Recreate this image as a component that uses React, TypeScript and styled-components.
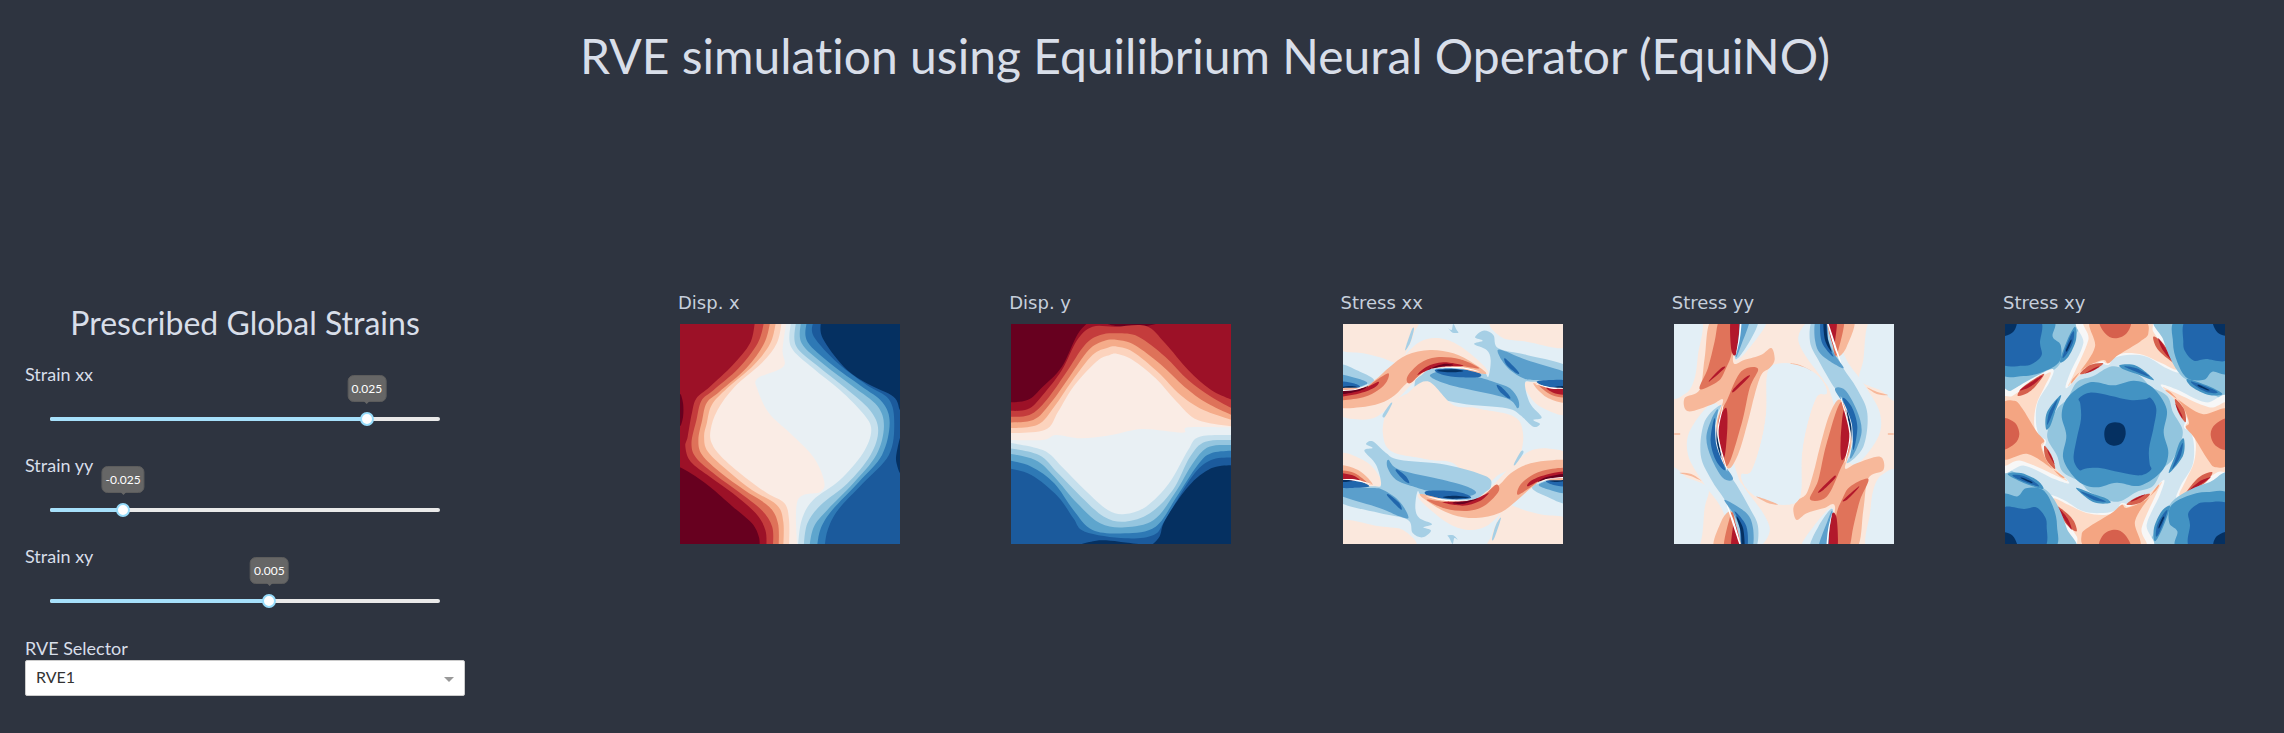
import React from 'react';
import styled, { createGlobalStyle } from 'styled-components';

const GlobalStyle = createGlobalStyle`
  html, body {
    margin: 0;
    background: #2e3440;
    color: #d8dee9;
    font-family: Lato, "Open Sans", sans-serif;
    font-variant-ligatures: none;
  }
`;

const Page = styled.div`
  width: 2284px;
  height: 733px;
  overflow: hidden;
  background: #2e3440;
`;

const Heading = styled.h1`
  margin: 0;
  padding: 26px 0 0 126px;
  height: 274px;
  box-sizing: border-box;
  text-align: center;
  font-size: 48px;
  line-height: 60px;
  font-weight: 400;
`;

const Row = styled.div`
  display: flex;
  align-items: flex-start;
`;

const Sidebar = styled.div`
  width: 440px;
  margin-left: 25px;
  flex: none;
`;

const SideTitle = styled.h3`
  margin: 27px 0 16px;
  text-align: center;
  font-size: 32px;
  line-height: 44px;
  font-weight: 400;
`;

const SliderBlock = styled.div`
  height: 91px;
`;

const FieldLabel = styled.div`
  font-size: 18px;
  line-height: 26px;
`;

const Track = styled.div`
  position: relative;
  margin: 30px 0 0 25px;
  width: 390px;
  height: 4px;
  border-radius: 2px;
  background: #e9e9e9;
`;

const TrackFill = styled.div`
  height: 100%;
  border-radius: 2px;
  background: #a6e0fb;
`;

const Handle = styled.div`
  position: absolute;
  top: -5px;
  width: 14px;
  height: 14px;
  margin-left: -7px;
  box-sizing: border-box;
  border-radius: 50%;
  background: #fff;
  border: 2px solid #96dbfa;
`;

const Bubble = styled.div`
  position: absolute;
  top: -42px;
  transform: translateX(-50%);
  padding: 0 3px;
  height: 25px;
  line-height: 25px;
  border-radius: 6px;
  background: #666;
  border: 1px solid #5c5c5c;
  color: #fff;
  font-size: 12px;
  white-space: nowrap;

  &::after {
    content: '';
    position: absolute;
    left: 50%;
    bottom: -3px;
    margin-left: -3px;
    border-style: solid;
    border-width: 3px 3px 0;
    border-color: #666 transparent transparent;
  }
`;

const SelectLabel = styled(FieldLabel)`
  margin-top: 2px;
  line-height: 24px;
`;

const Select = styled.div`
  position: relative;
  height: 36px;
  box-sizing: border-box;
  padding-left: 10px;
  line-height: 32px;
  font-size: 16px;
  color: #333;
  background: #fff;
  border: 1px solid #ccc;
  border-radius: 2px;
`;

const Caret = styled.span`
  position: absolute;
  right: 10px;
  top: 16px;
  border-style: solid;
  border-width: 5px 5px 0;
  border-color: #999 transparent transparent;
`;

const PlotGrid = styled.div`
  display: grid;
  grid-template-columns: repeat(4, 331.25px) 222px;
  margin: 16px 0 0 213px;
`;

const PlotCell = styled.div`
  padding-left: 2px;
`;

const PlotTitle = styled.div`
  margin-left: -2px;
  height: 34px;
  font-family: "DejaVu Sans", Verdana, sans-serif;
  font-size: 18px;
  line-height: 26px;
  color: #c6cfdc;
`;

const PlotFrame = styled.svg`
  display: block;
  width: 220px;
  height: 220px;
`;

type Shape = { f: string; p: string; e?: string };
type PlotSpec = {
  title: string;
  box: string;
  bg: string;
  shapes: Shape[];
  copies?: number;
  center?: [number, number];
  top?: Shape[];
};

const parse = (s: string) => s.trim().split(/\s+/).map((t) => t.split(',').map(Number));

// catmull-rom through the points, so a contour can be noted as a short list
const smooth = (pts: number[][], closed: boolean) => {
  const n = pts.length;
  const at = (i: number) => (closed ? pts[(i + n) % n] : pts[Math.max(0, Math.min(n - 1, i))]);
  let d = `M${pts[0][0]} ${pts[0][1]}`;
  const last = closed ? n : n - 1;
  for (let i = 0; i < last; i++) {
    const [p0, p1, p2, p3] = [at(i - 1), at(i), at(i + 1), at(i + 2)];
    const c1x = p1[0] + (p2[0] - p0[0]) / 6;
    const c1y = p1[1] + (p2[1] - p0[1]) / 6;
    const c2x = p2[0] - (p3[0] - p1[0]) / 6;
    const c2y = p2[1] - (p3[1] - p1[1]) / 6;
    d += `C${c1x.toFixed(1)} ${c1y.toFixed(1)} ${c2x.toFixed(1)} ${c2y.toFixed(1)} ${p2[0]} ${p2[1]}`;
  }
  return d;
};

const shapePath = (s: Shape) => {
  const pts = parse(s.p);
  if (!s.e) return smooth(pts, true) + 'Z';
  const edge = parse(s.e).map((q) => `L${q[0]} ${q[1]}`).join('');
  return smooth(pts, false) + edge + 'Z';
};

const R = {
  d0: '#67001f', d1: '#9c1127', d2: '#c43c3c', d3: '#de7259', d4: '#f5ac8a', d5: '#fcd3bd', d6: '#faece5',
  b6: '#e9f0f4', b5: '#c6e0ed', b4: '#95c6df', b3: '#5ea5cd', b2: '#2e79b5', b1: '#1b5a9c', b0: '#053061',
  red: '#b2182b', pink: '#fbe8dd', sky: '#e3eff6', lblue: '#a6cfe5', mblue: '#5b9fcc', dblue: '#2166ac',
  o1: '#f7b89a', o2: '#e0735a', w: '#ffffff',
};

const dispX: PlotSpec = {
  title: 'Disp. x',
  box: '52 132 575 660',
  bg: R.d1,
  shapes: [
    { f: R.d0, p: '40,555 80,580 130,620 190,680 240,730 258,770 260,800', e: '40,800' },
    { f: R.d0, p: '52,345 60,370 60,410 52,435' },
    { f: R.d2, p: '248,125 235,190 190,255 130,320 95,355 83,400 72,470 66,500 80,545 130,590 190,640 250,700 275,750 278,800', e: '700,800 700,125' },
    { f: R.d3, p: '272,125 255,190 205,265 140,330 108,362 95,420 82,490 95,535 145,585 205,635 265,690 293,740 295,800', e: '700,800 700,125' },
    { f: R.d4, p: '288,125 272,190 225,265 155,335 122,368 110,420 100,480 110,525 160,580 220,630 285,680 308,730 310,800', e: '700,800 700,125' },
    { f: R.d5, p: '303,125 288,190 245,255 175,325 135,375 122,430 115,470 125,515 180,575 240,630 305,675 322,725 322,800', e: '700,800 700,125' },
    { f: R.d6, p: '318,125 305,190 265,250 195,320 150,390 132,450 135,490 160,530 220,590 280,640 325,670 337,720 337,800', e: '700,800 700,125' },
    { f: R.b6, p: '330,125 320,210 322,260 255,295 255,330 285,400 340,460 400,530 428,600 420,635 360,660 358,800', e: '700,800 700,125' },
    { f: R.b5, p: '342,125 342,200 400,265 470,330 530,400 552,450 530,520 470,600 400,660 370,720 360,800', e: '700,800 700,125' },
    { f: R.b4, p: '355,125 355,197 412,258 485,325 548,390 570,450 550,525 490,610 420,675 385,730 375,800', e: '700,800 700,125' },
    { f: R.b3, p: '368,125 370,190 430,255 505,320 568,378 585,440 565,525 505,610 437,690 402,740 390,800', e: '700,800 700,125' },
    { f: R.b2, p: '383,125 385,185 450,255 525,318 582,368 600,430 580,525 520,605 450,690 420,745 410,800', e: '700,800 700,125' },
    { f: R.b1, p: '400,125 402,170 465,250 540,315 598,358 612,430 598,525 530,610 465,690 438,750 430,800', e: '700,800 700,125' },
    { f: R.b0, p: '420,125 425,175 480,260 540,310 610,350 627,390 640,400', e: '700,125' },
    { f: R.b0, p: '630,470 618,520 618,550 630,578' },
  ],
};

const dispY: PlotSpec = {
  title: 'Disp. y',
  box: '917 132 575 660',
  bg: R.d1,
  shapes: [
    { f: R.d0, p: '900,368 960,360 1000,320 1050,260 1090,165 1120,125', e: '900,125' },
    { f: R.d0, p: '1170,125 1190,138 1250,142 1305,125' },
    { f: R.d2, p: '900,392 960,388 1000,345 1050,270 1090,180 1130,140 1190,140 1270,138 1320,190 1380,270 1440,330 1500,362', e: '1500,800 900,800' },
    { f: R.d3, p: '900,410 965,405 1010,360 1060,280 1110,195 1150,165 1195,160 1250,170 1320,230 1380,300 1440,350 1500,388', e: '1500,800 900,800' },
    { f: R.d4, p: '900,428 975,420 1020,370 1070,290 1120,210 1160,183 1195,180 1240,195 1310,255 1370,320 1430,370 1500,408', e: '1500,800 900,800' },
    { f: R.d5, p: '900,445 985,435 1030,380 1075,305 1130,225 1170,203 1195,200 1235,215 1300,275 1360,345 1420,390 1500,422', e: '1500,800 900,800' },
    { f: R.d6, p: '900,460 1005,450 1040,395 1080,320 1140,245 1175,225 1195,222 1235,240 1295,295 1350,365 1405,420 1500,440', e: '1500,800 900,800' },
    { f: R.b6, p: '900,480 1000,480 1035,465 1100,475 1180,465 1260,447 1365,458 1380,442 1500,442', e: '1500,800 900,800' },
    { f: R.b5, p: '900,486 1000,510 1050,560 1110,630 1170,690 1215,702 1270,680 1330,610 1380,510 1410,470 1500,465', e: '1500,800 900,800' },
    { f: R.b4, p: '900,502 990,525 1040,580 1100,650 1160,710 1215,725 1280,700 1340,630 1385,530 1425,485 1500,480', e: '1500,800 900,800' },
    { f: R.b3, p: '900,518 980,540 1030,590 1090,670 1150,730 1215,742 1290,720 1345,640 1395,545 1435,500 1500,495', e: '1500,800 900,800' },
    { f: R.b2, p: '900,538 970,560 1030,610 1080,690 1130,750 1215,760 1295,740 1350,650 1405,555 1440,520 1500,512', e: '1500,800 900,800' },
    { f: R.b1, p: '900,562 970,585 1040,650 1080,715 1110,755 1215,775 1290,765 1320,720 1390,590 1440,540 1500,532', e: '1500,800 900,800' },
    { f: R.b0, p: '1500,555 1440,565 1380,620 1320,720 1305,770 1280,800', e: '1500,800' },
    { f: R.b0, p: '1100,800 1140,782 1200,785 1280,800' },
  ],
};

const stressXX: PlotSpec = {
  title: 'Stress xx',
  box: '69 72 660 660',
  bg: R.sky,
  copies: 2,
  center: [399, 402],
  shapes: [
    { f: R.pink, p: '55,60 277,60 282,100 255,165 235,190 180,172 130,160 55,145' },
    { f: R.pink, p: '520,60 740,60 740,142 620,125 545,112' },
    { f: R.pink, p: '215,310 280,275 300,305 400,320 530,335 590,355 608,400 590,460 540,520 475,560 400,490 330,480 240,455 195,420 190,370' },
    { f: R.pink, p: '240,178 300,125 360,115 430,145 505,220 400,215 300,235 230,300 170,350 110,358 55,338 55,250 160,240' },
    { f: R.pink, p: '620,245 630,290 670,325 740,342 740,250' },
    { f: R.lblue, p: '305,225 340,205 430,205 490,215 505,230 512,180 500,150 462,132 488,122 465,112 490,92 520,105 535,145 620,165 740,198 740,250 640,245 615,250 630,310 665,352 640,360 660,372 640,380 600,345 560,325 420,310 300,275 285,245' },
    { f: R.lblue, p: '55,195 120,215 162,240 130,262 55,270' },
    { f: R.mblue, p: '330,225 380,212 470,230 520,245 570,265 595,300 593,325 560,295 430,265 360,245' },
    { f: R.mblue, p: '533,150 560,155 620,180 740,218 740,240 640,240 610,235 570,210 545,180' },
    { f: R.mblue, p: '55,225 110,235 142,250 100,265 55,268' },
    { f: R.dblue, p: '345,210 400,206 470,215 480,230 420,232 370,225' },
    { f: R.dblue, p: '530,255 545,262 570,290 565,295 540,275' },
    { f: R.dblue, p: '555,175 595,215 590,220 560,195' },
    { f: R.dblue, p: '650,245 700,240 740,243 740,268 690,265' },
    { f: R.dblue, p: '55,245 100,250 118,262 55,268' },
    { f: R.b0, p: '350,212 400,208 430,213 395,217' },
    { f: R.b0, p: '700,262 729,258 729,266' },
    { f: R.b0, p: '69,260 95,258 110,262 69,266' },
    { f: R.o1, p: '55,268 130,262 165,240 210,200 260,165 330,150 400,160 460,190 497,222 400,200 340,198 300,225 260,250 225,285 180,310 120,322 55,320' },
    { f: R.o1, p: '640,250 690,264 740,268 740,308 680,292' },
    { f: R.o2, p: '55,272 130,265 170,240 205,220 200,245 175,270 130,292 55,300' },
    { f: R.o2, p: '262,230 300,190 350,172 420,178 478,205 420,198 350,198 310,215 270,250' },
    { f: R.o2, p: '655,254 690,266 740,270 740,292 695,285' },
    { f: R.red, p: '55,275 130,265 175,245 165,262 120,280 55,290' },
    { f: R.red, p: '292,225 320,200 370,187 430,197 370,200 330,208' },
    { f: R.red, p: '680,262 740,270 740,285 700,278' },
    { f: R.d0, p: '69,274 120,266 145,258 120,272 69,282' },
    { f: R.d0, p: '325,208 370,192 400,196 360,200' },
    { f: R.w, p: '55,270 110,266 150,250 115,268 55,274' },
    { f: R.w, p: '335,207 420,201 482,216 420,205 360,205' },
    { f: R.w, p: '640,250 695,262 740,264 695,266' },
    { f: R.lblue, p: '255,150 275,90 282,88 270,130' },
    { f: R.lblue, p: '188,345 210,312 216,312 195,350' },
    { f: R.lblue, p: '385,85 395,90 400,72 410,90 415,98 398,98' },
  ],
};

const stressYY: PlotSpec = {
  title: 'Stress yy',
  box: '72 72 660 660',
  bg: R.pink,
  copies: 2,
  center: [402, 402],
  shapes: [
    { f: R.sky, p: '400,190 470,205 515,240 530,280 500,290 470,380 455,470 450,590 404,614 334,599 289,564 274,524 304,514 334,424 349,334 354,214' },
    { f: R.sky, p: '660,60 745,60 745,290 690,270 630,240 640,180' },
    { f: R.sky, p: '745,525 695,525 670,570 660,640 650,745 745,745' },
    { f: R.sky, p: '480,60 445,110 465,165 520,240 545,290 600,490 680,420 690,340 640,250 590,180 540,60' },
    { f: R.lblue, p: '487,60 480,125 505,180 555,265 580,275 610,350 615,430 590,490 640,440 652,340 620,265 580,205 555,150 530,60' },
    { f: R.mblue, p: '497,60 495,120 515,165 580,205 555,165 535,120 525,60' },
    { f: R.mblue, p: '555,270 585,270 620,330 635,390 620,445 600,475 612,400 600,340' },
    { f: R.dblue, p: '512,60 515,125 550,170 535,130 530,60' },
    { f: R.dblue, p: '578,295 605,320 622,380 610,450 605,370' },
    { f: R.b0, p: '520,60 525,120 545,155 532,110 528,60' },
    { f: R.b0, p: '590,330 604,380 602,430 597,380' },
    { f: R.o1, p: '535,60 612,60 590,140 565,170 552,150' },
    { f: R.o2, p: '540,60 582,60 565,150 555,165 545,115' },
    { f: R.red, p: '535,60 560,60 555,125 552,140 540,105' },
    { f: R.w, p: '529,60 532,60 565,160 573,188 552,140' },
    { f: R.o1, p: '572,300 540,340 510,440 490,520 470,580 445,600 430,625 440,660 470,640 520,625 555,620 540,745 620,745 640,630 655,535 700,510 690,470 620,490 585,505 603,440 600,390' },
    { f: R.o2, p: '575,305 600,430 570,510 530,590 480,598 505,540 530,430' },
    { f: R.o2, p: '578,595 600,560 655,537 630,600 610,680 595,745 555,745 558,650' },
    { f: R.red, p: '582,330 600,400 595,450 575,480 572,420' },
    { f: R.red, p: '505,575 550,530 555,535 520,570' },
    { f: R.red, p: '580,600 625,560 620,570 590,600' },
    { f: R.sky, p: '455,745 490,680 548,625 535,745' },
    { f: R.lblue, p: '480,745 505,680 548,628 535,745' },
    { f: R.mblue, p: '505,745 530,670 547,635 534,745' },
    { f: R.red, p: '545,645 560,655 562,745 536,745' },
    { f: R.w, p: '546,640 538,690 533,745 529,745 534,690' },
    { f: R.w, p: '574,302 577,302 602,400 588,478 585,480 598,400' },
    { f: R.o1, p: '650,262 680,275 715,285 680,282' },
    { f: R.o1, p: '420,190 450,195 485,214 450,203' },
    { f: R.o1, p: '715,400 730,400 730,404 715,404' },
  ],
};

const blue1 = '#92c5de';
const blue2 = '#4393c3';
const blue3 = '#2166ac';
const pale = '#d1e5f0';

const quarter = (s: string, cx: number, cy: number) => {
  const pts = parse(s);
  const out: number[][] = [];
  for (let k = 0; k < 4; k++) {
    pts.forEach(([x, y]) => {
      const dx = x - cx;
      const dy = y - cy;
      const [rx, ry] = k === 0 ? [dx, dy] : k === 1 ? [-dy, dx] : k === 2 ? [-dx, -dy] : [dy, -dx];
      out.push([+(cx + rx).toFixed(1), +(cy + ry).toFixed(1)]);
    });
  }
  return out.map((q) => q.join(',')).join(' ');
};

const stressXY: PlotSpec = {
  title: 'Stress xy',
  box: '75 72 660 660',
  bg: pale,
  copies: 4,
  center: [405, 402],
  shapes: [
    { f: blue1, p: '60,60 295,60 290,100 255,165 228,205 180,235 120,258 60,275' },
    { f: blue2, p: '60,60 215,60 218,110 242,135 238,185 190,215 130,228 60,215' },
    { f: blue3, p: '60,60 178,60 180,130 185,165 160,190 130,197 60,185' },
    { f: R.b0, p: '60,60 108,60 100,95 60,108' },
    { f: '#f7f7f7', p: '300,60 525,60 535,90 570,150 600,215 560,205 500,170 440,165 400,175 385,195 350,190 300,225 258,265 270,220 310,130' },
    { f: '#fddbc7', p: '320,60 500,60 520,95 555,150 590,208 545,190 490,165 430,160 395,175 380,190 360,185 300,225 265,258 280,225 325,120' },
    { f: '#f4a582', p: '335,60 485,60 505,100 480,125 415,165 385,190 370,180 320,200 280,235 275,250 300,215 345,140' },
    { f: '#d6604d', p: '362,60 448,60 440,100 405,115 375,100' },
    { f: '#d6604d', p: '520,110 545,125 570,160 585,190 550,165 528,140' },
    { f: R.red, p: '535,115 560,150 580,185 548,150' },
    { f: '#d6604d', p: '300,222 330,195 370,190 340,212' },
    { f: R.red, p: '315,220 345,203 358,200 335,213' },
    { f: blue2, p: '240,185 262,120 285,80 288,120 265,170' },
    { f: blue3, p: '248,170 270,110 282,95 278,130 258,165' },
    { f: R.b0, p: '258,150 272,120 274,125 262,152' },
  ],
  top: [
    { f: blue1, p: quarter('262,296 292,245 340,228 390,200 430,205 480,228', 405, 402) },
    { f: blue2, p: quarter('245,345 265,290 330,247 400,256', 405, 402) },
    { f: blue3, p: quarter('297,295 330,278 390,287 450,300 495,298', 405, 402) },
    { f: R.b0, p: '405,367 430,375 437,402 425,430 400,437 378,425 373,397 382,375' },
    { f: blue2, p: quarter('420,195 470,198 522,240 470,222 430,208', 405, 402).split(' ').slice(0, 5).join(' ') },
    { f: blue2, p: quarter('420,195 470,198 522,240 470,222 430,208', 405, 402).split(' ').slice(5, 10).join(' ') },
    { f: blue2, p: quarter('420,195 470,198 522,240 470,222 430,208', 405, 402).split(' ').slice(10, 15).join(' ') },
    { f: blue2, p: quarter('420,195 470,198 522,240 470,222 430,208', 405, 402).split(' ').slice(15, 20).join(' ') },
    { f: blue3, p: quarter('432,199 470,205 510,230 470,216', 405, 402).split(' ').slice(0, 4).join(' ') },
    { f: blue3, p: quarter('432,199 470,205 510,230 470,216', 405, 402).split(' ').slice(4, 8).join(' ') },
    { f: blue3, p: quarter('432,199 470,205 510,230 470,216', 405, 402).split(' ').slice(8, 12).join(' ') },
    { f: blue3, p: quarter('432,199 470,205 510,230 470,216', 405, 402).split(' ').slice(12, 16).join(' ') },
  ],
};

const plots: PlotSpec[] = [dispX, dispY, stressXX, stressYY, stressXY];

const Paths = ({ list }: { list: Shape[] }) => (
  <>
    {list.map((s, i) => (
      <path key={i} d={shapePath(s)} fill={s.f} />
    ))}
  </>
);

const Contour = ({ spec }: { spec: PlotSpec }) => {
  const [x, y, w, h] = spec.box.split(' ').map(Number);
  const copies = spec.copies ?? 1;
  const [cx, cy] = spec.center ?? [0, 0];
  return (
    <PlotFrame viewBox={spec.box} preserveAspectRatio="none">
      <rect x={x} y={y} width={w} height={h} fill={spec.bg} />
      {Array.from({ length: copies }, (_, k) => (
        <g key={k} transform={`rotate(${(360 / copies) * k} ${cx} ${cy})`}>
          <Paths list={spec.shapes} />
        </g>
      ))}
      {spec.top && <Paths list={spec.top} />}
    </PlotFrame>
  );
};

const StrainSlider = ({ label, value }: { label: string; value: number }) => {
  const pct = ((value + 0.04) / 0.08) * 100;
  return (
    <SliderBlock>
      <FieldLabel>{label}</FieldLabel>
      <Track>
        <TrackFill style={{ width: `${pct}%` }} />
        <Handle style={{ left: `${pct}%` }} />
        <Bubble style={{ left: `${pct}%` }}>{value.toFixed(3)}</Bubble>
      </Track>
    </SliderBlock>
  );
};

export default function App() {
  return (
    <Page>
      <GlobalStyle />
      <Heading>RVE simulation using Equilibrium Neural Operator (EquiNO)</Heading>
      <Row>
        <Sidebar>
          <SideTitle>Prescribed Global Strains</SideTitle>
          <StrainSlider label="Strain xx" value={0.025} />
          <StrainSlider label="Strain yy" value={-0.025} />
          <StrainSlider label="Strain xy" value={0.005} />
          <SelectLabel>RVE Selector</SelectLabel>
          <Select>
            RVE1
            <Caret />
          </Select>
        </Sidebar>
        <PlotGrid>
          {plots.map((p) => (
            <PlotCell key={p.title}>
              <PlotTitle>{p.title}</PlotTitle>
              <Contour spec={p} />
            </PlotCell>
          ))}
        </PlotGrid>
      </Row>
    </Page>
  );
}
